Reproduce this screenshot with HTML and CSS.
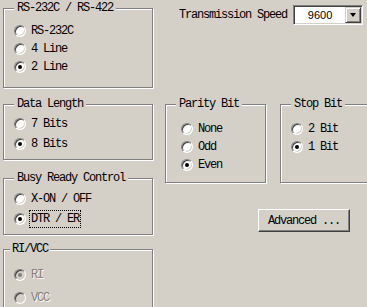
FILE: index.html
```html
<!DOCTYPE html>
<html lang="en">
<head>
    <meta charset="UTF-8">
    <meta name="viewport" content="width=device-width, initial-scale=1.0">
    <title>Port Settings</title>

    <link rel="stylesheet" href="styles.css">
</head>
<body>
    <div class="dialog">
        <div class="column-left">
            <div class="group group-port">
                <span class="group-title">RS-232C / RS-422</span>
                <div class="options">
                    <label class="option"><span class="radio"></span>RS-232C</label>
                    <label class="option"><span class="radio"></span>4 Line</label>
                    <label class="option"><span class="radio checked"></span>2 Line</label>
                </div>
            </div>
            <div class="group group-length">
                <span class="group-title">Data Length</span>
                <div class="options">
                    <label class="option"><span class="radio"></span>7 Bits</label>
                    <label class="option"><span class="radio checked"></span>8 Bits</label>
                </div>
            </div>
            <div class="group group-busy">
                <span class="group-title">Busy Ready Control</span>
                <div class="options">
                    <label class="option"><span class="radio"></span>X-ON / OFF</label>
                    <label class="option"><span class="radio checked"></span><span class="focus">DTR / ER</span></label>
                </div>
            </div>
            <div class="group group-ri">
                <span class="group-title">RI/VCC</span>
                <div class="options">
                    <label class="option disabled"><span class="radio checked"></span>RI</label>
                    <label class="option disabled"><span class="radio"></span>VCC</label>
                </div>
            </div>
        </div>

        <div class="column-right">
            <div class="speed-row">
                <span class="speed-label">Transmission Speed</span>
                <div class="select">
                    <span class="select-value">9600</span>
                    <span class="select-button"><span class="arrow"></span></span>
                </div>
            </div>
            <div class="groups-row">
                <div class="group group-parity">
                    <span class="group-title">Parity Bit</span>
                    <div class="options">
                        <label class="option"><span class="radio"></span>None</label>
                        <label class="option"><span class="radio"></span>Odd</label>
                        <label class="option"><span class="radio checked"></span>Even</label>
                    </div>
                </div>
                <div class="group group-stop">
                    <span class="group-title">Stop Bit</span>
                    <div class="options">
                        <label class="option"><span class="radio"></span>2 Bit</label>
                        <label class="option"><span class="radio checked"></span>1 Bit</label>
                    </div>
                </div>
            </div>
            <button class="button">Advanced ...</button>
        </div>
    </div>
</body>
</html>
```

FILE: styles.css
```css
body {
    margin: 0;
    width: 367px;
    height: 307px;
    overflow: hidden;
    background-color: #d4d0c8;
    font-family: "Liberation Mono", "Courier New", monospace;
    font-size: 12px;
    letter-spacing: -1.2px;
    color: #000;
}

.dialog {
    display: flex;
    align-items: flex-start;
    padding-left: 3px;
}

.column-left {
    display: flex;
    flex-direction: column;
    flex-shrink: 0;
    width: 150px;
    margin-top: 8px;
}

.column-right {
    display: flex;
    flex-direction: column;
    flex-shrink: 0;
    margin-left: 12px;
}

/* etched frame: grey line with a white line beside it */
.group {
    display: flex;
    flex-direction: column;
    align-items: flex-start;
    box-sizing: border-box;
    border: 1px solid #808080;
    box-shadow: inset 1px 1px 0 #fff, 1px 1px 0 #fff;
    flex-shrink: 0;
}

.group-title {
    height: 12px;
    margin-top: -7px;
    margin-left: 10px;
    padding: 0 3px;
    line-height: 12px;
    background-color: #d4d0c8;
    white-space: nowrap;
}

.options {
    display: flex;
    flex-direction: column;
    padding-left: 10px;
}

.option {
    display: flex;
    align-items: center;
    gap: 5px;
    height: 18px;
    white-space: nowrap;
}

.group-port { height: 80px; }
.group-port .options { margin-top: 8px; }

.group-length { height: 56px; margin-top: 16px; }
.group-length .options { margin-top: 4px; }
.group-length .option { height: 20px; }

.group-busy { height: 57px; margin-top: 18px; }
.group-busy .options { margin-top: 5px; }
.group-busy .option { height: 20px; }

.group-ri { height: 80px; margin-top: 14px; }
.group-ri .group-title { margin-left: 6px; padding: 0 2px; }
.group-ri .options { margin-top: 8px; }
.group-ri .option { height: 23px; }

.group-parity { width: 101px; height: 79px; }
.group-parity .options { margin-top: 10px; padding-left: 15px; }

.group-stop { width: 100px; height: 79px; }
.group-stop .options { margin-top: 10px; }

.radio {
    display: flex;
    align-items: center;
    justify-content: center;
    box-sizing: border-box;
    width: 12px;
    height: 12px;
    border-radius: 50%;
    border: 1px solid;
    border-color: #808080 #fff #fff #808080;
    box-shadow: inset 1px 1px 0 #404040, inset -1px -1px 0 #d4d0c8;
    background-color: #fff;
    flex-shrink: 0;
}

.radio.checked::after {
    content: "";
    width: 4px;
    height: 4px;
    border-radius: 50%;
    background-color: #000;
}

.disabled {
    color: #808080;
    text-shadow: 1px 1px 0 #fff;
}

.disabled .radio {
    background-color: #d4d0c8;
}

.disabled .radio.checked::after {
    background-color: #808080;
}

.focus {
    outline: 1px dotted #000;
    outline-offset: 1px;
}

.speed-row {
    display: flex;
    align-items: center;
    gap: 6px;
    height: 20px;
    margin-top: 5px;
    padding-left: 14px;
}

.select {
    display: flex;
    align-items: center;
    box-sizing: border-box;
    width: 70px;
    height: 20px;
    padding: 1px;
    border: 1px solid;
    border-color: #808080 #fff #fff #808080;
    box-shadow: inset 1px 1px 0 #404040, inset -1px -1px 0 #d4d0c8;
    background-color: #fff;
}

.select-value {
    flex: 1;
    text-align: center;
    font-family: "Liberation Sans", Arial, sans-serif;
    font-size: 11px;
    letter-spacing: 0;
}

.select-button {
    display: flex;
    align-items: center;
    justify-content: center;
    box-sizing: border-box;
    width: 16px;
    height: 16px;
    border: 1px solid;
    border-color: #d4d0c8 #404040 #404040 #d4d0c8;
    box-shadow: inset 1px 1px 0 #fff, inset -1px -1px 0 #808080;
    background-color: #d4d0c8;
}

.arrow {
    width: 0;
    height: 0;
    border-left: 3.5px solid transparent;
    border-right: 3.5px solid transparent;
    border-top: 4px solid #000;
}

.groups-row {
    display: flex;
    gap: 14px;
    margin-top: 79px;
}

.button {
    align-self: flex-start;
    box-sizing: border-box;
    width: 92px;
    height: 23px;
    margin-top: 26px;
    margin-left: 93px;
    padding: 0;
    border: 1px solid;
    border-color: #fff #404040 #404040 #fff;
    box-shadow: inset -1px -1px 0 #808080;
    background-color: #d4d0c8;
    font-family: "Liberation Mono", "Courier New", monospace;
    font-size: 12px;
    letter-spacing: -1.2px;
    color: #000;
}
```
